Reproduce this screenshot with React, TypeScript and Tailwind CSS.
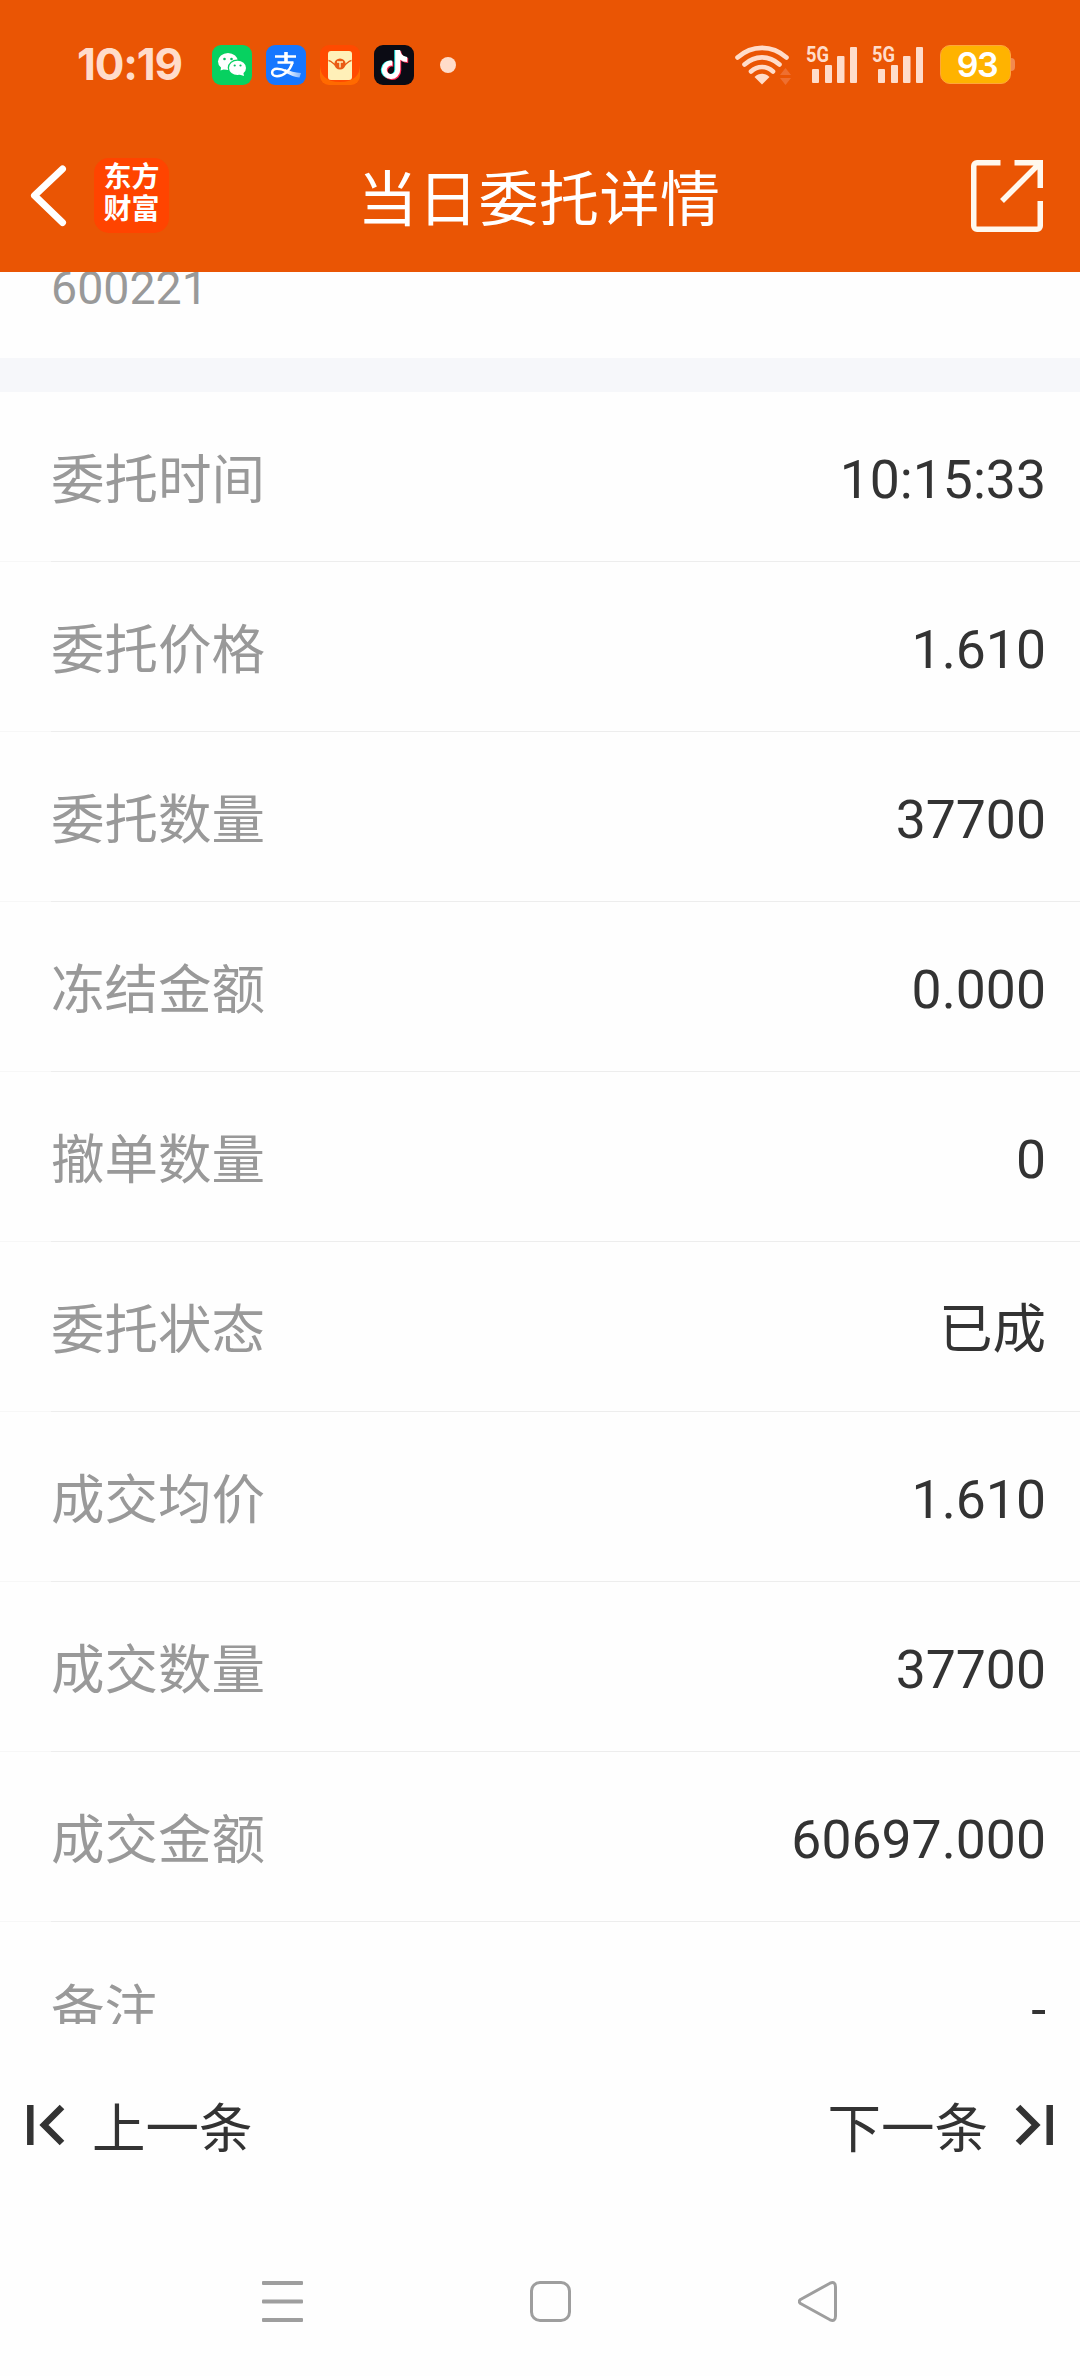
import { FaTiktok } from "react-icons/fa6";

const rows = [
    { label: "委托时间", value: "10:15:33" },
    { label: "委托价格", value: "1.610" },
    { label: "委托数量", value: "37700" },
    { label: "冻结金额", value: "0.000" },
    { label: "撤单数量", value: "0" },
    { label: "委托状态", value: "已成" },
    { label: "成交均价", value: "1.610" },
    { label: "成交数量", value: "37700" },
    { label: "成交金额", value: "60697.000" },
    { label: "备注", value: "-" },
];

function WechatIcon() {
    return (
        <svg viewBox="0 0 40 40" className="size-10 rounded-[9px] bg-[#07d160]">
            <path d="M8.500 25.500l1-5 5 3z" fill="#fff" />
            <ellipse cx="16" cy="16.500" rx="10" ry="8.600" fill="#fff" />
            <ellipse cx="25.300" cy="22.800" rx="9.600" ry="8.300" fill="#07d160" />
            <ellipse cx="25.500" cy="22.900" rx="8.500" ry="7.200" fill="#fff" />
            <path d="M32 31l-.8-4-4 2.500z" fill="#fff" />
            <circle cx="12.500" cy="14" r="1.300" fill="#07c160" />
            <circle cx="19.500" cy="14" r="1.300" fill="#07c160" />
            <circle cx="22.700" cy="20.500" r="1.100" fill="#07c160" />
            <circle cx="28.500" cy="20.500" r="1.100" fill="#07c160" />
        </svg>
    );
}

function AlipayIcon() {
    return (
        <svg viewBox="0 0 40 40" fill="none" className="size-10 rounded-[9px] bg-[#1677ff]">
            <defs>
                <linearGradient id="tail" x1="20" y1="0" x2="35" y2="0" gradientUnits="userSpaceOnUse">
                    <stop stopColor="#fff" />
                    <stop offset="1" stopColor="#fff" stopOpacity=".45" />
                </linearGradient>
            </defs>
            <path d="M9 11.500h21M11.500 17.500h16" stroke="#fff" strokeWidth="2.300" />
            <path d="M20 7v10.500" stroke="#fff" strokeWidth="3.600" />
            <path
                d="M26.500 17.500C24 26 17 31.300 11 31.300c-6.500 0-6.500-7.500 0-7.500 3.500 0 7 1.200 10 2.500"
                stroke="#fff"
                strokeWidth="2.500"
            />
            <path d="M19 24.300c5 2 10 3.200 16 3.700l-1.500 4.500c-4.500-.3-9-2-15-5.200z" fill="url(#tail)" />
        </svg>
    );
}

function MailIcon() {
    return (
        <svg viewBox="0 0 40 40" fill="none" className="size-10 rounded-[9px] bg-[#ff4a00]">
            <path d="M0 20v20h40V20c0 10-6 17-20 17S0 30 0 20z" fill="#ff6a00" />
            <rect x="8" y="6" width="24" height="29" rx="3" fill="#fff0b8" />
            <path d="M8.500 15.500c3 .3 5.500 4 8 5.500M31.500 15.500c-3 .3-5.500 4-8 5.500" stroke="#e85a10" strokeWidth="1.300" />
            <circle cx="20" cy="19" r="5.600" fill="#ea5a14" />
            <path d="M17 17h6M20 17v5.500" stroke="#fff0b8" strokeWidth="1.400" />
        </svg>
    );
}

function TiktokIcon() {
    return (
        <div className="relative size-10 rounded-[9px] bg-[#0b0b14]">
            <FaTiktok className="absolute left-[5px] top-[5px] size-[29px] text-[#25f4ee]" />
            <FaTiktok className="absolute left-[7px] top-[6px] size-[29px] text-[#fe2c55]" />
            <FaTiktok className="absolute left-[6px] top-[5px] size-[29px] text-white" />
        </div>
    );
}

function WifiIcon() {
    return (
        <svg width="58" height="42" viewBox="0 0 58 42" fill="none" className="-mt-px">
            <g stroke="#ffdcca" strokeWidth="4.600" strokeLinecap="round">
                <path d="M3.500 13.500C18 .6 38 .6 52.500 13.500" />
                <path d="M10.500 20.500c10.500-9.500 24.500-9.500 35 0" />
                <path d="M17 27.500c6.500-6 15.500-6 22 0" />
            </g>
            <path d="M20.500 33c4.500-4.200 10.500-4.200 15 0L28 40.500z" fill="#ffdcca" />
            <path d="M51.500 24l5.500 7H46zM51.500 41l5.500-7H46z" fill="#ee6f30" />
        </svg>
    );
}

function SignalIcon() {
    return (
        <svg width="52" height="40" viewBox="0 0 52 40" fill="#ffdcca" className="overflow-visible">
            <text x="0" y="17" textLength="23" lengthAdjust="spacingAndGlyphs" className="font-[Roboto] text-[22px] font-bold">
                5G
            </text>
            <rect x="6" y="24" width="7" height="14" rx="1" />
            <rect x="19" y="20" width="7" height="18" rx="1" />
            <rect x="31" y="11" width="7.500" height="27" rx="1" />
            <rect x="44" y="2" width="7" height="36" rx="1" />
        </svg>
    );
}

function StatusBar() {
    return (
        <div className="flex h-[130px] items-start pl-[77px] pr-[65px] pt-[45px]">
            <div className="-mt-[6px] w-[135px] font-[Inter] text-[44px] font-bold leading-[50px] tracking-[-1.200px] text-[#ffdcca]">
                10:19
            </div>
            <div className="flex gap-[14px]">
                <WechatIcon />
                <AlipayIcon />
                <MailIcon />
                <TiktokIcon />
            </div>
            <div className="ml-[26px] mt-3 size-4 rounded-full bg-[#ffdcca]" />
            <div className="ml-auto flex">
                <WifiIcon />
                <div className="ml-[14px] flex gap-[14px]">
                    <SignalIcon />
                    <SignalIcon />
                </div>
                <div className="ml-4 flex h-[39px] items-center">
                    <div className="flex h-[39px] w-[71px] items-center justify-center rounded-[10px] border border-[#ffa63a] bg-[#ffb300] pl-[3px] font-[Inter] text-[34px] font-semibold leading-none tracking-[-1.500px] text-white">
                        93
                    </div>
                    <div className="h-[13px] w-1 rounded-r bg-[#f28a50]" />
                </div>
            </div>
        </div>
    );
}

function TitleBar() {
    return (
        <div className="flex h-[142px] items-start justify-between pl-[30px] pr-[37px] pt-7">
            <div className="flex w-[200px]">
                <svg width="38" height="75" viewBox="0 0 38 75" fill="none" className="mr-[26px]">
                    <path
                        d="M32.500 11L4.500 37.500L32.500 64.500"
                        stroke="#fff"
                        strokeWidth="7"
                        strokeLinecap="round"
                        strokeLinejoin="round"
                    />
                </svg>
                <div className="flex size-[75px] flex-col items-center justify-center rounded-[15px] bg-[#ff4400] pb-1 text-[28px] font-bold leading-[32px] text-white">
                    <span>东方</span>
                    <span>财富</span>
                </div>
            </div>
            <h1 className="ml-[5px] mt-[5px] text-[60px] leading-[76px] tracking-[0.500px] text-white">当日委托详情</h1>
            <div className="flex w-[200px] justify-end pt-[2px]">
                <svg width="72" height="72" viewBox="0 0 72 72" fill="none" stroke="#fff8ee" strokeWidth="5.500">
                    <path d="M29.500 2.750H6a3.250 3.250 0 0 0-3.250 3.250v60A3.250 3.250 0 0 0 6 69.250h60a3.250 3.250 0 0 0 3.250-3.250V41" />
                    <path d="M43.500 2.750h25.750V28M69 3L31 41" />
                </svg>
            </div>
        </div>
    );
}

function DetailRow({ label, value }: { label: string; value: string }) {
    return (
        <div className="flex h-[170px] shrink-0 flex-col">
            <div className="flex flex-1 items-center justify-between pl-[51px] pr-[34px] text-[53.500px] leading-[80px]">
                <span className="pt-[8px] text-[#999]">{label}</span>
                <span className="pt-[6px] text-[#333]">{value}</span>
            </div>
            <div className="flex h-px">
                <div className="w-[51px] bg-[#f7f7f7]" />
                <div className="flex-1 bg-[#ededed]" />
            </div>
        </div>
    );
}

function SkipIcon({ className }: { className?: string }) {
    return (
        <svg width="38" height="42" viewBox="0 0 38 42" fill="none" stroke="#333" className={className}>
            <path d="M3.300 1v40" strokeWidth="6.500" />
            <path d="M35 3L17 21l18 18" strokeWidth="6.500" />
        </svg>
    );
}

function NavBar() {
    return (
        <div className="flex gap-[227px] pl-[262px]">
            <svg width="41" height="42" viewBox="0 0 41 42" fill="#9e9e9e">
                <rect y="0" width="41" height="4" rx="1" />
                <rect y="18.500" width="41" height="4" rx="1" />
                <rect y="37" width="41" height="4" rx="1" />
            </svg>
            <div className="h-[41px] w-[41px] rounded-[10px] border-[3px] border-[#9e9e9e]" />
            <svg width="41" height="42" viewBox="0 0 41 42" fill="none">
                <path
                    d="M2.500 18.500L32 2.200Q37.500 0 37.500 6V35Q37.500 41 32 38.800L2.500 22.500Q0 20.500 2.500 18.500z"
                    stroke="#9e9e9e"
                    strokeWidth="3"
                    strokeLinejoin="round"
                />
            </svg>
        </div>
    );
}

export default function App() {
    return (
        <div className="flex h-[2376px] w-[1080px] flex-col overflow-hidden bg-[#fefefe] font-[Roboto,'Noto_Sans_CJK_SC',sans-serif]">
            <header className="h-[272px] shrink-0 bg-[#ea5504]">
                <StatusBar />
                <TitleBar />
            </header>

            <main className="flex h-[1752px] shrink-0 flex-col overflow-hidden">
                <div className="h-[86px] shrink-0 overflow-hidden pl-[51px]">
                    <div className="-mt-[14px] text-[46.500px] leading-[60px] text-[#999]">600221</div>
                </div>
                <div className="h-[34px] shrink-0 bg-[#f6f7fa]" />
                {rows.map((row) => (
                    <DetailRow key={row.label} label={row.label} value={row.value} />
                ))}
            </main>

            <footer className="flex flex-1 flex-col">
                <div className="flex h-[257px] items-start justify-between px-[27px] pt-[64px] text-[53.500px] leading-[80px] text-[#333]">
                    <div className="flex">
                        <SkipIcon className="mt-4" />
                        <span className="ml-[27px] mt-[2px]">上一条</span>
                    </div>
                    <div className="flex">
                        <span className="mr-[27px] mt-[2px]">下一条</span>
                        <SkipIcon className="mt-4 rotate-180" />
                    </div>
                </div>
                <NavBar />
            </footer>
        </div>
    );
}
